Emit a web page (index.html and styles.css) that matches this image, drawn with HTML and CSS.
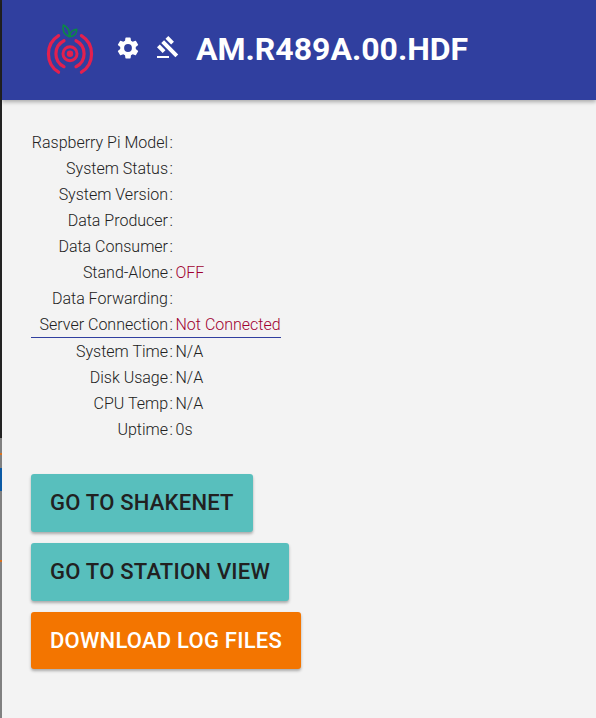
FILE: index.html
```html
<!DOCTYPE html>
<html lang="en">
<head>
    <meta charset="UTF-8">
    <meta name="viewport" content="width=device-width, initial-scale=1.0">
    <title>AM.R489A.00.HDF</title>
    <link rel="stylesheet" href="styles.css">
</head>
<body>
    <div class="edge">
        <div class="edge-dark"></div>
        <div class="edge-gray edge-a"></div>
        <div class="edge-orange"></div>
        <div class="edge-gray edge-b"></div>
        <div class="edge-blue"></div>
        <div class="edge-gray edge-c"></div>
        <div class="edge-orange"></div>
        <div class="edge-gray edge-d"></div>
    </div>
    <div class="page">
        <header class="header">
            <svg class="logo" viewBox="0 0 50 52" width="50" height="52" fill="none">
                <g stroke="#e3204e" stroke-width="3.200" stroke-linecap="round">
                    <circle cx="25" cy="29.700" r="3.200" fill="#e3204e" stroke="none"/>
                    <circle cx="25" cy="29.700" r="7" stroke-width="3"/>
                    <path d="M19 16.700a14.500 14.500 0 0 0 0 26"/>
                    <path d="M31 16.700a14.500 14.500 0 0 1 0 26"/>
                    <path d="M13.600 11.700a21.500 21.500 0 0 0 0 36.500"/>
                    <path d="M36.400 11.700a21.500 21.500 0 0 1 0 36.500"/>
                </g>
                <g stroke="#0b8a45" stroke-width="1.600" stroke-linejoin="round">
                    <path d="M18.300 1c4.700 2 6.700 6.500 5.700 11.700c-4.700-2-6.700-6.500-5.700-11.700z"/>
                    <path d="M31.700 5.300c.3 4-2.500 7-6.700 7.400c-.3-4 2.500-7 6.700-7.400z"/>
                </g>
            </svg>
            <svg class="icon icon-gear" viewBox="0 0 24 24" width="26" height="26">
                <path fill="#fff" d="M19.140 12.940c.04-.3.06-.61.06-.94s-.02-.64-.07-.94l2.030-1.580a.49.49 0 0 0 .12-.61l-1.920-3.320a.49.49 0 0 0-.59-.22l-2.390.96a7 7 0 0 0-1.620-.94l-.36-2.540a.48.48 0 0 0-.48-.41h-3.840a.47.47 0 0 0-.47.41l-.36 2.540c-.59.24-1.130.57-1.620.94l-2.390-.96a.48.48 0 0 0-.59.22L2.740 8.870a.47.47 0 0 0 .12.61l2.030 1.580c-.05.3-.09.63-.09.94s.02.64.07.94l-2.030 1.580a.49.49 0 0 0-.12.61l1.920 3.320c.12.22.37.29.59.22l2.390-.96c.5.38 1.030.7 1.620.94l.36 2.540c.05.24.24.41.48.41h3.840c.24 0 .44-.17.47-.41l.36-2.540c.59-.24 1.130-.56 1.620-.94l2.390.96c.22.08.47 0 .59-.22l1.920-3.320a.47.47 0 0 0-.12-.61l-2.010-1.580zM12 15.600A3.610 3.610 0 0 1 8.400 12 3.610 3.610 0 0 1 12 8.400a3.610 3.610 0 0 1 3.600 3.600 3.610 3.610 0 0 1-3.600 3.600z"/>
            </svg>
            <svg class="icon icon-gavel" viewBox="0 0 24 24" width="24" height="24">
                <path fill="#fff" d="M1 21h12v2H1zM5.245 8.070l2.830-2.827 14.140 14.142-2.828 2.828zM12.317 1l5.657 5.656-2.830 2.830-5.654-5.660zM3.825 9.485l5.657 5.657-2.828 2.828-5.657-5.657z"/>
            </svg>
            <h1 class="title">AM.R489A.00.HDF</h1>
        </header>

        <main class="main-content">
            <div class="status">
                <div class="row"><span class="label">Raspberry Pi Model</span><span class="sep">:</span><span class="value"></span></div>
                <div class="row"><span class="label">System Status</span><span class="sep">:</span><span class="value"></span></div>
                <div class="row"><span class="label">System Version</span><span class="sep">:</span><span class="value"></span></div>
                <div class="row"><span class="label">Data Producer</span><span class="sep">:</span><span class="value"></span></div>
                <div class="row"><span class="label">Data Consumer</span><span class="sep">:</span><span class="value"></span></div>
                <div class="row"><span class="label">Stand-Alone</span><span class="sep">:</span><span class="value value-off">OFF</span></div>
                <div class="row"><span class="label">Data Forwarding</span><span class="sep">:</span><span class="value"></span></div>
                <div class="row row-last"><span class="label">Server Connection</span><span class="sep">:</span><span class="value value-off">Not Connected</span></div>
                <div class="row"><span class="label">System Time</span><span class="sep">:</span><span class="value">N/A</span></div>
                <div class="row"><span class="label">Disk Usage</span><span class="sep">:</span><span class="value">N/A</span></div>
                <div class="row"><span class="label">CPU Temp</span><span class="sep">:</span><span class="value">N/A</span></div>
                <div class="row"><span class="label">Uptime</span><span class="sep">:</span><span class="value">0s</span></div>
            </div>

            <div class="buttons">
                <a href="#" class="btn btn-teal">Go to ShakeNet</a>
                <a href="#" class="btn btn-teal">Go to Station View</a>
                <a href="#" class="btn btn-orange">Download Log Files</a>
            </div>
        </main>
    </div>
</body>
</html>
```

FILE: styles.css
```css
* {
    margin: 0;
    padding: 0;
    box-sizing: border-box;
    font-family: Roboto, "Liberation Sans", sans-serif;
}

html, body {
    height: 100%;
}

body {
    display: flex;
    background-color: #f3f3f3;
    overflow: hidden;
}

.edge {
    width: 2px;
    flex: none;
    display: flex;
    flex-direction: column;
    height: 718px;
}

.edge-dark {
    height: 438px;
    background-color: #222;
}

.edge-gray {
    background-color: #808080;
}

.edge-a {
    height: 15px;
}

.edge-b {
    height: 13px;
}

.edge-c {
    height: 69px;
}

.edge-d {
    flex: 1;
}

.edge-orange {
    height: 2px;
    background-color: #d9701c;
}

.edge-blue {
    height: 23px;
    background-color: #0b5aa5;
}

.page {
    flex: 1;
    min-width: 0;
}

.header {
    display: flex;
    align-items: center;
    height: 100px;
    padding-left: 43px;
    background-color: #303f9f;
    box-shadow: 0 2px 4px rgba(0,0,0,0.3);
}

.icon-gear {
    margin: 0 15px 5px 20px;
}

.icon-gavel {
    margin-bottom: 7px;
}

.title {
    margin: 0 0 3px 16px;
    font-size: 32px;
    font-weight: 700;
    color: #fff;
}

.main-content {
    padding: 30px 0 0 29px;
}

.status {
    width: 250px;
}

.row {
    display: flex;
    height: 26px;
    line-height: 26px;
    font-size: 16px;
    font-weight: 300;
    color: #212121;
}

.row-last {
    margin-bottom: 1px;
    border-bottom: 1px solid #303f9f;
}

.label {
    width: 137px;
    text-align: right;
    white-space: nowrap;
}

.sep {
    width: 7.5px;
    padding-left: 1.5px;
}

.value {
    white-space: nowrap;
}

.value-off {
    color: #a00030;
}

.buttons {
    display: flex;
    flex-direction: column;
    align-items: flex-start;
    gap: 11px;
    margin-top: 31px;
}

.btn {
    display: block;
    height: 58px;
    line-height: 58px;
    padding: 0 19px;
    border-radius: 3px;
    font-size: 22px;
    font-weight: 500;
    letter-spacing: 0.23px;
    text-decoration: none;
    text-transform: uppercase;
    box-shadow: 0 2px 3px rgba(0,0,0,0.3);
}

.btn-teal {
    background-color: #58bfbd;
    color: #212121;
}

.btn-orange {
    height: 57px;
    line-height: 57px;
    background-color: #f37500;
    color: #fff;
}
```
